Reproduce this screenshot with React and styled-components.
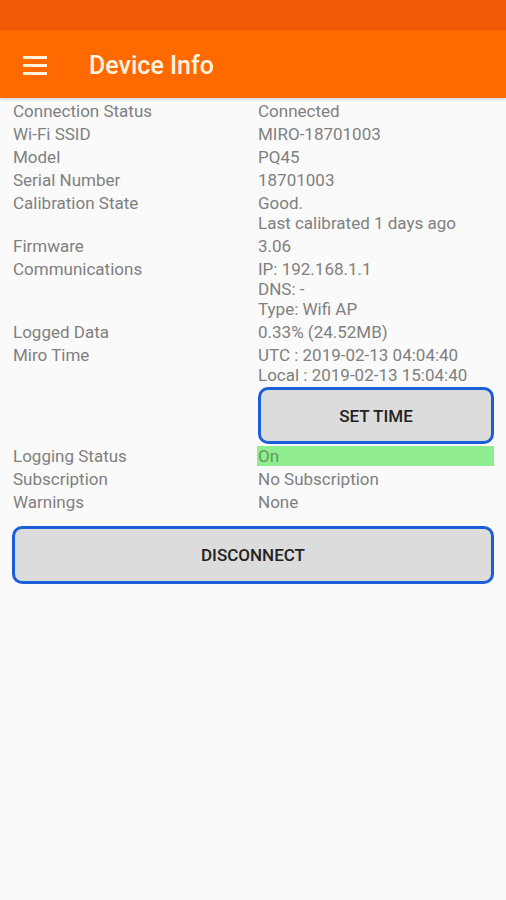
import React from "react";
import styled, { createGlobalStyle } from "styled-components";

const GlobalStyle = createGlobalStyle`
  html, body {
    margin: 0;
    padding: 0;
    background: #fafafa;
    font-family: Roboto, "Liberation Sans", sans-serif;
  }
`;

const Page = styled.div`
  width: 506px;
  min-height: 900px;
  background: #fafafa;
`;

const StatusBar = styled.div`
  height: 30px;
  background: #f45a06;
`;

const AppBar = styled.header`
  height: 68px;
  background: #ff6a00;
  display: flex;
  align-items: center;
  box-shadow: 0 1px 3px rgba(0, 0, 0, 0.2);
`;

const MenuButton = styled.div`
  width: 24px;
  margin-left: 23px;
  margin-top: 2px;
  display: flex;
  flex-direction: column;
  gap: 5px;
  span {
    display: block;
    height: 3px;
    background: #fff3e0;
  }
`;

const Title = styled.h1`
  margin: 3px 0 0 42px;
  font-size: 25px;
  font-weight: 500;
  color: #fff3e0;
`;

const Content = styled.div`
  padding: 3px 12px 0 12px;
`;

const Row = styled.div`
  display: grid;
  grid-template-columns: 245px 1fr;
  margin-bottom: 3px;
  font-size: 17px;
  line-height: 20px;
  color: #808080;
`;

const Label = styled.div`
  padding-left: 1px;
`;

const Value = styled.div`
  padding-left: 1px;
  background: ${(p) => (p.highlight ? "#90ee90" : "transparent")};
  color: ${(p) => (p.highlight ? "#5f9a5f" : "inherit")};
`;

const ButtonRow = styled.div`
  display: flex;
  padding-left: ${(p) => (p.offset ? "246px" : "0")};
  margin: ${(p) => p.margin || "0"};
`;

const ActionButton = styled.button`
  flex: 1;
  height: ${(p) => p.h || "57px"};
  background: #dcdcdc;
  border: 3px solid #1a5fd8;
  border-radius: 10px;
  font-family: Roboto, "Liberation Sans", sans-serif;
  font-size: 17px;
  font-weight: 500;
  color: #222;
  padding: 0;
`;

const rows = [
  ["Connection Status", ["Connected"]],
  ["Wi-Fi SSID", ["MIRO-18701003"]],
  ["Model", ["PQ45"]],
  ["Serial Number", ["18701003"]],
  ["Calibration State", ["Good.", "Last calibrated 1 days ago"]],
  ["Firmware", ["3.06"]],
  ["Communications", ["IP: 192.168.1.1", "DNS: -", "Type: Wifi AP"]],
  ["Logged Data", ["0.33% (24.52MB)"]],
  ["Miro Time", ["UTC : 2019-02-13 04:04:40", "Local : 2019-02-13 15:04:40"]],
];

const rows2 = [
  ["Logging Status", ["On"], true],
  ["Subscription", ["No Subscription"]],
  ["Warnings", ["None"]],
];

function InfoRow({ label, lines, highlight }) {
  return (
    <Row>
      <Label>{label}</Label>
      <Value highlight={highlight}>
        {lines.map((l) => (
          <div key={l}>{l}</div>
        ))}
      </Value>
    </Row>
  );
}

export default function App() {
  return (
    <Page>
      <GlobalStyle />
      <StatusBar />
      <AppBar>
        <MenuButton>
          <span />
          <span />
          <span />
        </MenuButton>
        <Title>Device Info</Title>
      </AppBar>
      <Content>
        {rows.map(([label, lines]) => (
          <InfoRow key={label} label={label} lines={lines} />
        ))}
        <ButtonRow offset margin="-1px 0 2px 0">
          <ActionButton>SET TIME</ActionButton>
        </ButtonRow>
        {rows2.map(([label, lines, hl]) => (
          <InfoRow key={label} label={label} lines={lines} highlight={hl} />
        ))}
        <ButtonRow margin="14px 0 0 0">
          <ActionButton h="58px">DISCONNECT</ActionButton>
        </ButtonRow>
      </Content>
    </Page>
  );
}
